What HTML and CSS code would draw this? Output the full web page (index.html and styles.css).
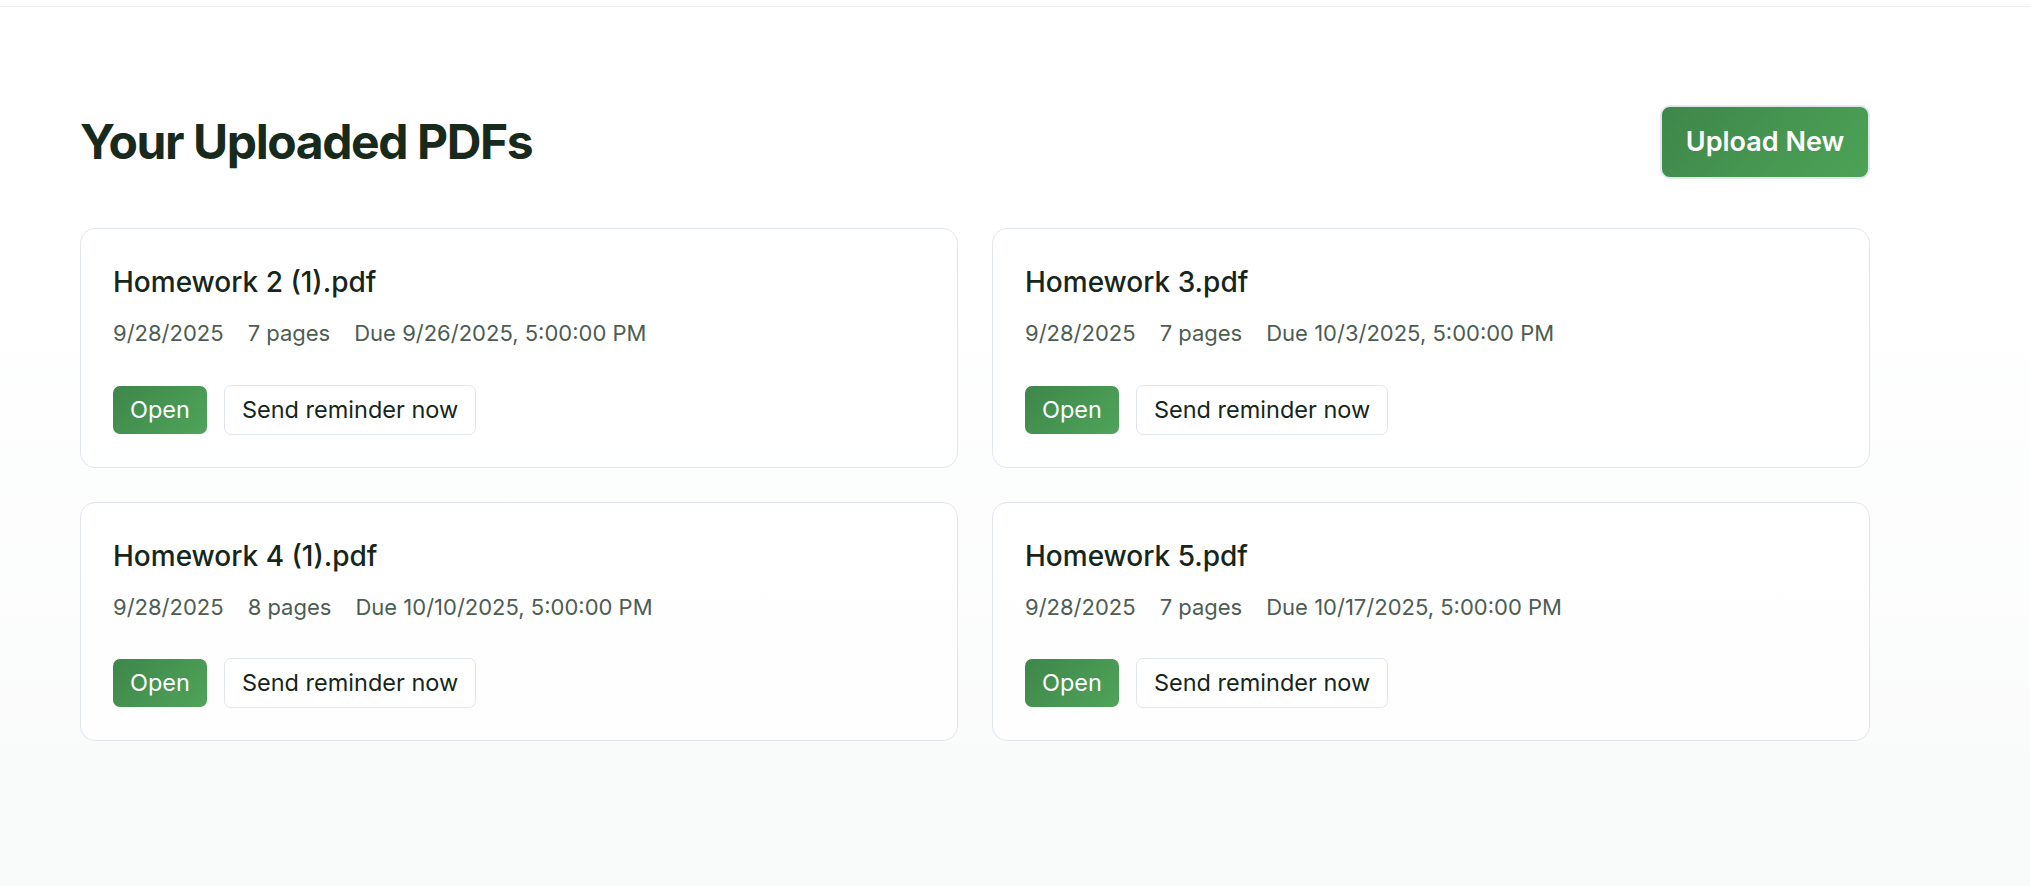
FILE: index.html
```html
<!DOCTYPE html>
<html lang="en">
<head>
<meta charset="utf-8">
<title>Your Uploaded PDFs</title>
<link rel="stylesheet" href="styles.css">
</head>
<body>
<div class="topbar"></div>
<main class="page">
  <header class="page-header">
    <h1 class="page-title">Your Uploaded PDFs</h1>
    <button class="btn-upload" type="button">Upload New</button>
  </header>
  <section class="grid">
    <article class="card">
      <h2 class="card-title">Homework 2 (1).pdf</h2>
      <div class="meta"><span>9/28/2025</span><span>7 pages</span><span>Due 9/26/2025, 5:00:00 PM</span></div>
      <div class="actions"><button class="btn-open" type="button">Open</button><button class="btn-outline" type="button">Send reminder now</button></div>
    </article>
    <article class="card">
      <h2 class="card-title">Homework 3.pdf</h2>
      <div class="meta"><span>9/28/2025</span><span>7 pages</span><span>Due 10/3/2025, 5:00:00 PM</span></div>
      <div class="actions"><button class="btn-open" type="button">Open</button><button class="btn-outline" type="button">Send reminder now</button></div>
    </article>
    <article class="card">
      <h2 class="card-title">Homework 4 (1).pdf</h2>
      <div class="meta"><span>9/28/2025</span><span>8 pages</span><span>Due 10/10/2025, 5:00:00 PM</span></div>
      <div class="actions"><button class="btn-open" type="button">Open</button><button class="btn-outline" type="button">Send reminder now</button></div>
    </article>
    <article class="card">
      <h2 class="card-title">Homework 5.pdf</h2>
      <div class="meta"><span>9/28/2025</span><span>7 pages</span><span>Due 10/17/2025, 5:00:00 PM</span></div>
      <div class="actions"><button class="btn-open" type="button">Open</button><button class="btn-outline" type="button">Send reminder now</button></div>
    </article>
  </section>
</main>
</body>
</html>
```
FILE: styles.css
```css
html, body {
  margin: 0;
  padding: 0;
}
body {
  min-height: 886px;
  font-family: Inter, "Noto Sans", sans-serif;
  line-height: 1.5;
  color: #17261b;
  background: linear-gradient(180deg, #ffffff 0%, #ffffff 30%, #f8faf9 100%);
}
.topbar {
  height: 6px;
  border-bottom: 1px solid #eaeef1;
}
.page {
  width: 1790px;
  margin: 98px 0 0 80px;
}
.page-header {
  display: flex;
  align-items: center;
  justify-content: space-between;
  height: 74px;
  margin-bottom: 49px;
}
.page-title {
  margin: 0;
  font-size: 48px;
  font-weight: 700;
  letter-spacing: -1.4px;
  line-height: 1.2;
  color: #172a1c;
}
.btn-upload {
  box-sizing: border-box;
  width: 210px;
  height: 74px;
  padding: 0;
  font-family: inherit;
  font-size: 27px;
  font-weight: 600;
  line-height: 34px;
  white-space: nowrap;
  text-align: center;
  color: #ffffff;
  border: 2px solid #e1e7ee;
  border-radius: 10px;
  background: linear-gradient(135deg, #3e864a 0%, #4da357 100%);
}
.grid {
  display: grid;
  grid-template-columns: 1fr 1fr;
  gap: 34px;
}
.card {
  border: 1.5px solid #e1e6ee;
  border-radius: 15px;
  background: rgba(255, 255, 255, 0.75);
  padding: 32px;
}
.card-title {
  margin: 0 0 15px;
  font-size: 28px;
  font-weight: 500;
  line-height: 42px;
  color: #16261a;
}
.meta {
  display: flex;
  gap: 24px;
  font-size: 22px;
  line-height: 31.5px;
  color: #4d5d53;
}
.actions {
  display: flex;
  align-items: center;
  gap: 17px;
  margin-top: 35px;
}
.btn-open {
  font-family: inherit;
  font-size: 23.5px;
  line-height: 32px;
  color: #ffffff;
  padding: 8px 17px;
  border: none;
  border-radius: 7px;
  background: linear-gradient(135deg, #3e864a 0%, #4fa45a 100%);
}
.btn-outline {
  font-family: inherit;
  font-size: 23.5px;
  line-height: 32px;
  color: #16261a;
  padding: 8px 17px;
  border: 1.5px solid #e1e6ee;
  border-radius: 7px;
  background: #ffffff;
}
```
